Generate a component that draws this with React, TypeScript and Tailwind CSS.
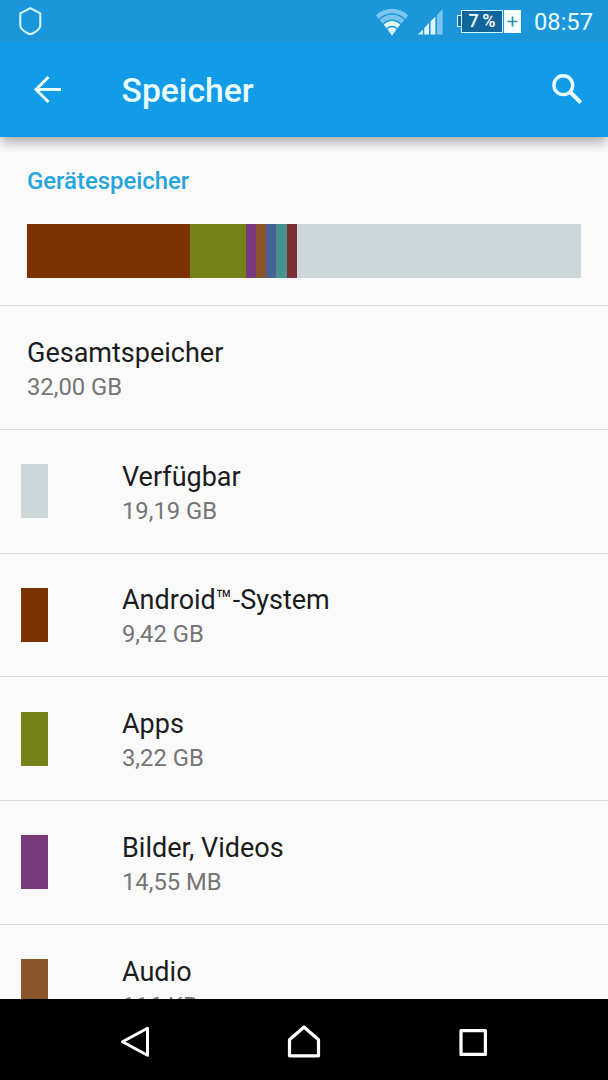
interface StorageEntry {
    label: string;
    size: string;
    swatch: string;
}

const entries: StorageEntry[] = [
    { label: 'Verfügbar', size: '19,19 GB', swatch: 'bg-[#cdd6d9]' },
    { label: 'Android™-System', size: '9,42 GB', swatch: 'bg-[#7c3201]' },
    { label: 'Apps', size: '3,22 GB', swatch: 'bg-[#758218]' },
    { label: 'Bilder, Videos', size: '14,55 MB', swatch: 'bg-[#783a7b]' },
    { label: 'Audio', size: '116 KB', swatch: 'bg-[#8b562b]' },
];

const segments = [
    { color: 'bg-[#7c3201]', width: 163 },
    { color: 'bg-[#758218]', width: 56 },
    { color: 'bg-[#783a7b]', width: 10 },
    { color: 'bg-[#8b562b]', width: 10.3 },
    { color: 'bg-[#486294]', width: 10.2 },
    { color: 'bg-[#47928f]', width: 10.2 },
    { color: 'bg-[#7c3033]', width: 10 },
];

function StatusBar() {
    return (
        <div className="relative z-20 flex h-[42px] shrink-0 items-center bg-[#1b96da] pl-[19px] pr-[14px]">
            <svg className="h-[42px] w-6" viewBox="0 0 24 42" fill="none" stroke="#d5fbff" strokeWidth="2" strokeLinejoin="round">
                <path d="M11.3 8.2 21.3 13.4V25.5C21.3 28.5 18.5 30.8 13.5 33.5Q11.3 34.7 9.1 33.5C4.1 30.8 1.3 28.5 1.3 25.5V13.4Z" />
            </svg>
            <div className="ml-auto flex items-center">
                {/* Wifi */}
                <svg className="mr-[9px] h-[42px] w-[34px]" viewBox="0 0 34 42">
                    <path d="M.8 15.6A22.5 22.5 0 0 1 33.2 15.6L30.2 19.1A18 18 0 0 0 3.8 19.1Z" fill="#79c5ef" />
                    <path d="M4.7 20.1A16.6 16.6 0 0 1 29.3 20.1L26.2 23.7A12 12 0 0 0 7.8 23.7Z" fill="#79c5ef" />
                    <path d="M8.7 24.8A11 11 0 0 1 25.3 24.8L22.3 28.3A7 7 0 0 0 11.7 28.3Z" fill="#dffaff" />
                    <path d="M12.5 29.3A6 6 0 0 1 21.5 29.3L17 35.8Z" fill="#dffaff" />
                </svg>
                {/* Mobile signal */}
                <svg className="mr-[13px] h-[42px] w-[26px]" viewBox="0 0 26 42">
                    <path d="M0 34.5 4.9 29.4V34.5Z" fill="#dffaff" />
                    <path d="M6.2 28.1 11 23V34.5H6.2Z" fill="#dffaff" />
                    <path d="M12.6 21.4 17.4 16.4V34.5H12.6Z" fill="#dffaff" />
                    <path d="M19 14.7 24.6 9V34.5H19Z" fill="#79c5ef" />
                </svg>
                <div className="mr-[13px] flex items-center">
                    <div className="h-3 w-1 border border-r-0 border-[#d5fbff] bg-[#11659a]" />
                    <div className="flex h-[23px] w-[42px] items-center justify-center border border-[#d5fbff] bg-[#11659a] text-[18px] font-medium leading-none text-white">
                        7&thinsp;%
                    </div>
                    <svg className="ml-px h-[23px] w-[17px]" viewBox="0 0 17 23">
                        <path d="M0 0H17V23H0Z" fill="#f8ffff" />
                        <path d="M8.5 6.5V16.5M3.5 11.5H13.5" stroke="#288fae" strokeWidth="1.7" />
                    </svg>
                </div>
                <span className="w-[60px] whitespace-nowrap pt-px text-[23.7px] leading-[42px] text-[#e6fcff]">08:57</span>
            </div>
        </div>
    );
}

function Toolbar() {
    return (
        <header className="relative z-10 flex h-[95px] shrink-0 items-center bg-[#129ce8] pl-[33px] pr-[24px] shadow-[0_6px_11px_-1px_rgba(0,0,0,0.34)]">
            <svg className="h-7 w-7" viewBox="0 0 28 28" fill="none" stroke="#e8feff" strokeWidth="3">
                <path d="M28 13.5H3M15.5 1 3 13.5 15.5 26" />
            </svg>
            <h1 className="ml-[60.5px] pt-[3px] text-[33.7px] font-medium leading-10 text-[#e8feff]">Speicher</h1>
            <svg className="ml-auto h-8 w-8" viewBox="0 0 32 32" fill="none" stroke="#e8feff">
                <circle cx="11.3" cy="11.2" r="9.4" strokeWidth="3.4" />
                <path d="M18.6 18.5 28.8 28.7" strokeWidth="4" />
            </svg>
        </header>
    );
}

function RowText({ label, size }: { label: string; size: string }) {
    return (
        <div className="pt-[29.9px]">
            <div className="text-[27px] leading-[34px] text-[#1c1c1c]">{label}</div>
            <div className="text-[23.8px] leading-[35px] text-[#757575]">{size}</div>
        </div>
    );
}

function NavigationBar() {
    return (
        <nav className="flex h-[81px] shrink-0 items-center justify-between bg-black px-[118px]">
            <svg className="h-9 w-9" viewBox="0 0 36 36" fill="none" stroke="#fff" strokeWidth="3" strokeLinejoin="round">
                <path d="M29.5 6.3V33.3L4.5 19.8Z" />
            </svg>
            <svg className="h-9 w-9" viewBox="0 0 36 36" fill="none" stroke="#fff" strokeWidth="3.2" strokeLinejoin="round">
                <path d="M18 5 32.5 17.8V33.8H3.5V17.8Z" />
            </svg>
            <svg className="h-9 w-9" viewBox="0 0 36 36" fill="none" stroke="#fff" strokeWidth="3.2" strokeLinejoin="round">
                <path d="M7 8.7H31.4V32.4H7Z" />
            </svg>
        </nav>
    );
}

export default function App() {
    return (
        <div className="flex h-[1080px] w-[608px] flex-col overflow-hidden bg-[#fafafa] font-[Roboto,sans-serif]">
            <StatusBar />
            <Toolbar />
            <main className="min-h-0 flex-1 overflow-hidden">
                <section className="h-[169px] border-b-[1.5px] border-[#dcdcdc] px-[27px] pt-[28px]">
                    <h2 className="text-[23.9px] font-medium leading-8 text-[#25a5dc]">Gerätespeicher</h2>
                    <div className="mt-[27px] flex h-[54px] bg-[#cdd6d9]">
                        {segments.map((segment) => (
                            <div key={segment.color} className={segment.color} style={{ width: segment.width }} />
                        ))}
                    </div>
                </section>
                <div className="h-[123.75px] border-b-[1.5px] border-[#dcdcdc] pl-[27px]">
                    <RowText label="Gesamtspeicher" size="32,00 GB" />
                </div>
                {entries.map((entry) => (
                    <div key={entry.label} className="flex h-[123.75px] border-b-[1.5px] border-[#dcdcdc] pl-[21px]">
                        <div className={`mr-[74px] mt-[34.3px] h-[54px] w-[27px] ${entry.swatch}`} />
                        <RowText label={entry.label} size={entry.size} />
                    </div>
                ))}
            </main>
            <NavigationBar />
        </div>
    );
}
